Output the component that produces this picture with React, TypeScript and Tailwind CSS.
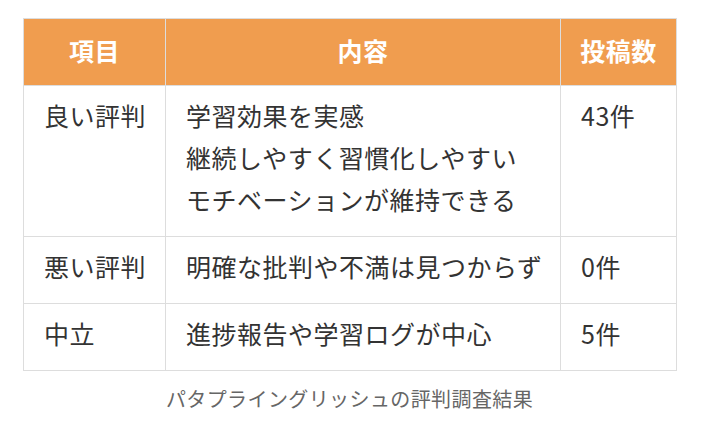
import React from 'react';

const rows = [
  { label: '良い評判', lines: ['学習効果を実感', '継続しやすく習慣化しやすい', 'モチベーションが維持できる'], count: '43件' },
  { label: '悪い評判', lines: ['明確な批判や不満は見つからず'], count: '0件' },
  { label: '中立', lines: ['進捗報告や学習ログが中心'], count: '5件' },
];

export default function App() {
  return (
    <div className="bg-white min-h-screen pt-[18px] pl-[23px] font-['Noto_Sans_CJK_JP','Noto_Sans',sans-serif] text-[#333]">
      <table className="w-[653px] border-collapse table-fixed text-[25px] leading-[42px] tracking-[0.02em]">
        <colgroup>
          <col className="w-[142px]" />
          <col className="w-[395px]" />
          <col className="w-[116px]" />
        </colgroup>
        <thead>
          <tr className="bg-[#f09d4f] text-white">
            <th className="border border-[#dddddd] pt-[10px] pb-[14px] font-bold whitespace-nowrap">項目</th>
            <th className="border border-[#dddddd] pt-[10px] pb-[14px] font-bold whitespace-nowrap">内容</th>
            <th className="border border-[#dddddd] pt-[10px] pb-[14px] font-bold whitespace-nowrap">投稿数</th>
          </tr>
        </thead>
        <tbody>
          {rows.map((r) => (
            <tr key={r.label}>
              <td className="border border-[#dddddd] pl-5 pr-1 pt-2 pb-4 align-top whitespace-nowrap">{r.label}</td>
              <td className="border border-[#dddddd] pl-5 pr-1 pt-2 pb-4 align-top whitespace-nowrap">
                {r.lines.map((l) => (
                  <div key={l}>{l}</div>
                ))}
              </td>
              <td className="border border-[#dddddd] pl-5 pr-1 pt-2 pb-4 align-top whitespace-nowrap">{r.count}</td>
            </tr>
          ))}
        </tbody>
      </table>
      <p className="w-[653px] mt-[13px] text-center text-[20px] tracking-[0.02em] text-[#666]">
        パタプライングリッシュの評判調査結果
      </p>
    </div>
  );
}
